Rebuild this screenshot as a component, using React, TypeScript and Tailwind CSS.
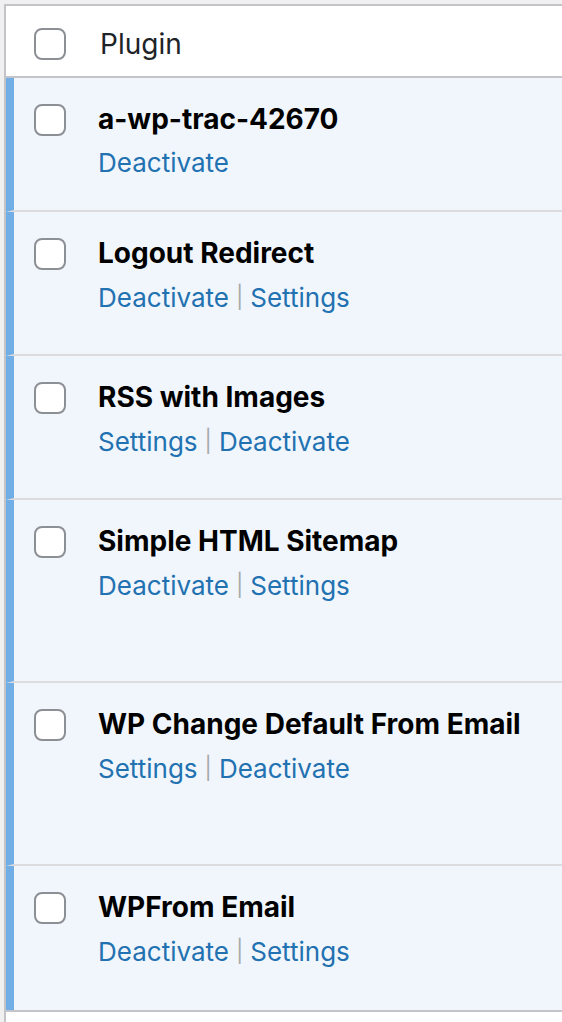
import React from "react";

type Plugin = {
  name: string;
  links: string[];
  h: string;
};

const plugins: Plugin[] = [
  { name: "a-wp-trac-42670", links: ["Deactivate"], h: "h-[134px]" },
  { name: "Logout Redirect", links: ["Deactivate", "Settings"], h: "h-[144px]" },
  { name: "RSS with Images", links: ["Settings", "Deactivate"], h: "h-[144px]" },
  { name: "Simple HTML Sitemap", links: ["Deactivate", "Settings"], h: "h-[183px]" },
  { name: "WP Change Default From Email", links: ["Settings", "Deactivate"], h: "h-[183px]" },
  { name: "WPFrom Email", links: ["Deactivate", "Settings"], h: "h-[144px]" },
];

const Checkbox = () => (
  <span className="block w-[32px] h-[32px] rounded-[8px] border-2 border-[#8c8f94] bg-white shrink-0" />
);

export default function App() {
  return (
    <div
      className="min-h-[1022px] bg-[#f0f0f1] pt-[4px] pl-[4px]"
      style={{ fontFamily: 'Inter, "Noto Sans", "Liberation Sans", sans-serif' }}
    >
      <div className="min-h-[1018px] bg-white border-l-2 border-t-2 border-[#c3c4c7]">
        {/* header */}
        <div className="h-[72px] flex items-start border-b-2 border-[#c3c4c7] pl-[28px] pt-[22px]">
          <Checkbox />
          <span className="ml-[34px] text-[28px] leading-[32px] text-[#1d2327]">Plugin</span>
        </div>

        {/* rows */}
        <div className="border-b-2 border-[#c3c4c7]">
          {plugins.map((p, i) => (
            <div
              key={p.name}
              className={`flex bg-[#f0f6fc] border-l-[8px] border-[#72aee6] ${p.h} ${
                i < plugins.length - 1 ? "border-b-2 border-b-[#dcdcde]" : ""
              }`}
            >
              <div className="pl-[20px] pt-[26px]">
                <Checkbox />
              </div>
              <div className="ml-[32px] pt-[24px]">
                <div className="text-[28px] leading-[34px] font-bold text-black whitespace-nowrap">
                  {p.name}
                </div>
                <div className="mt-[10px] text-[26px] leading-[34px] text-[#2271b1] whitespace-nowrap">
                  {p.links.map((l, j) => (
                    <span key={l}>
                      {j > 0 && <span className="text-[#a7aaad] mx-[7px] text-[22px] align-[2px]">|</span>}
                      {l}
                    </span>
                  ))}
                </div>
              </div>
            </div>
          ))}
        </div>
      </div>
    </div>
  );
}
